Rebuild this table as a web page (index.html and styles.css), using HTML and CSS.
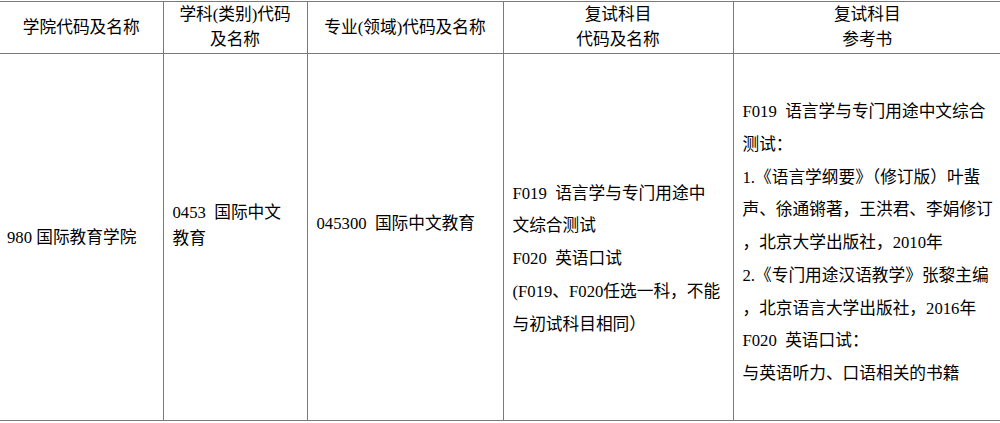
FILE: index.html
```html
<!DOCTYPE html>
<html lang="zh-CN">
<head>
<meta charset="utf-8">
<title>复试科目</title>
<link rel="stylesheet" href="styles.css">
</head>
<body>
<table class="tbl">
  <colgroup>
    <col class="c1"><col class="c2"><col class="c3"><col class="c4"><col class="c5">
  </colgroup>
  <thead>
    <tr class="head">
      <th>学院代码及名称</th>
      <th>学科(类别)代码<br>及名称</th>
      <th>专业(领域)代码及名称</th>
      <th>复试科目<br>代码及名称</th>
      <th>复试科目<br>参考书</th>
    </tr>
  </thead>
  <tbody>
    <tr class="body">
      <td class="col1">980 国际教育学院</td>
      <td class="col2">0453&nbsp; 国际中文<br>教育</td>
      <td class="col3">045300&nbsp; 国际中文教育</td>
      <td class="col4">F019&nbsp; 语言学与专门用途中<br>文综合测试<br>F020&nbsp; 英语口试<br>(F019、F020任选一科，不能<br>与初试科目相同）</td>
      <td class="col5">F019&nbsp; 语言学与专门用途中文综合<br>测试：<br>1.《语言学纲要》（修订版）叶蜚<br>声、徐通锵著，王洪君、李娟修订<br>，北京大学出版社，2010年<br>2.《专门用途汉语教学》张黎主编<br>，北京语言大学出版社，2016年<br>F020&nbsp; 英语口试：<br>与英语听力、口语相关的书籍</td>
    </tr>
  </tbody>
</table>
</body>
</html>
```

FILE: styles.css
```css
html, body {
  margin: 0;
  padding: 0;
  background: #ffffff;
}
body {
  font-family: "Liberation Serif", "Noto Sans CJK SC", serif;
  font-size: 16.7px;
  color: #000000;
  overflow: hidden;
}
.tbl {
  border-collapse: collapse;
  table-layout: fixed;
  width: 1001px;
  margin-top: 1px;
}
.c1 { width: 163px; }
.c2 { width: 144px; }
.c3 { width: 196px; }
.c4 { width: 230px; }
.c5 { width: 268px; }

.tbl th, .tbl td {
  border: 1px solid #7a7a7a;
  padding: 0;
}
.tbl tr > :first-child { border-left: none; }
.tbl tr > :last-child { border-right: none; }

.head { height: 52px; }
.head th {
  font-weight: normal;
  line-height: 25px;
  text-align: center;
  vertical-align: middle;
  padding-bottom: 1px;
}
.body { height: 367px; }
.body td {
  vertical-align: middle;
  text-align: left;
  line-height: 32.7px;
}
.body td.col1 { padding-left: 7px; padding-top: 3px; }
.body td.col2 { padding-left: 9px; line-height: 26px; padding-bottom: 22px; }
.body td.col3 { padding-left: 9px; padding-bottom: 25px; }
.body td.col4 { padding-left: 9px; padding-top: 45px; }
.body td.col5 { padding-left: 9px; padding-top: 13px; }
```
